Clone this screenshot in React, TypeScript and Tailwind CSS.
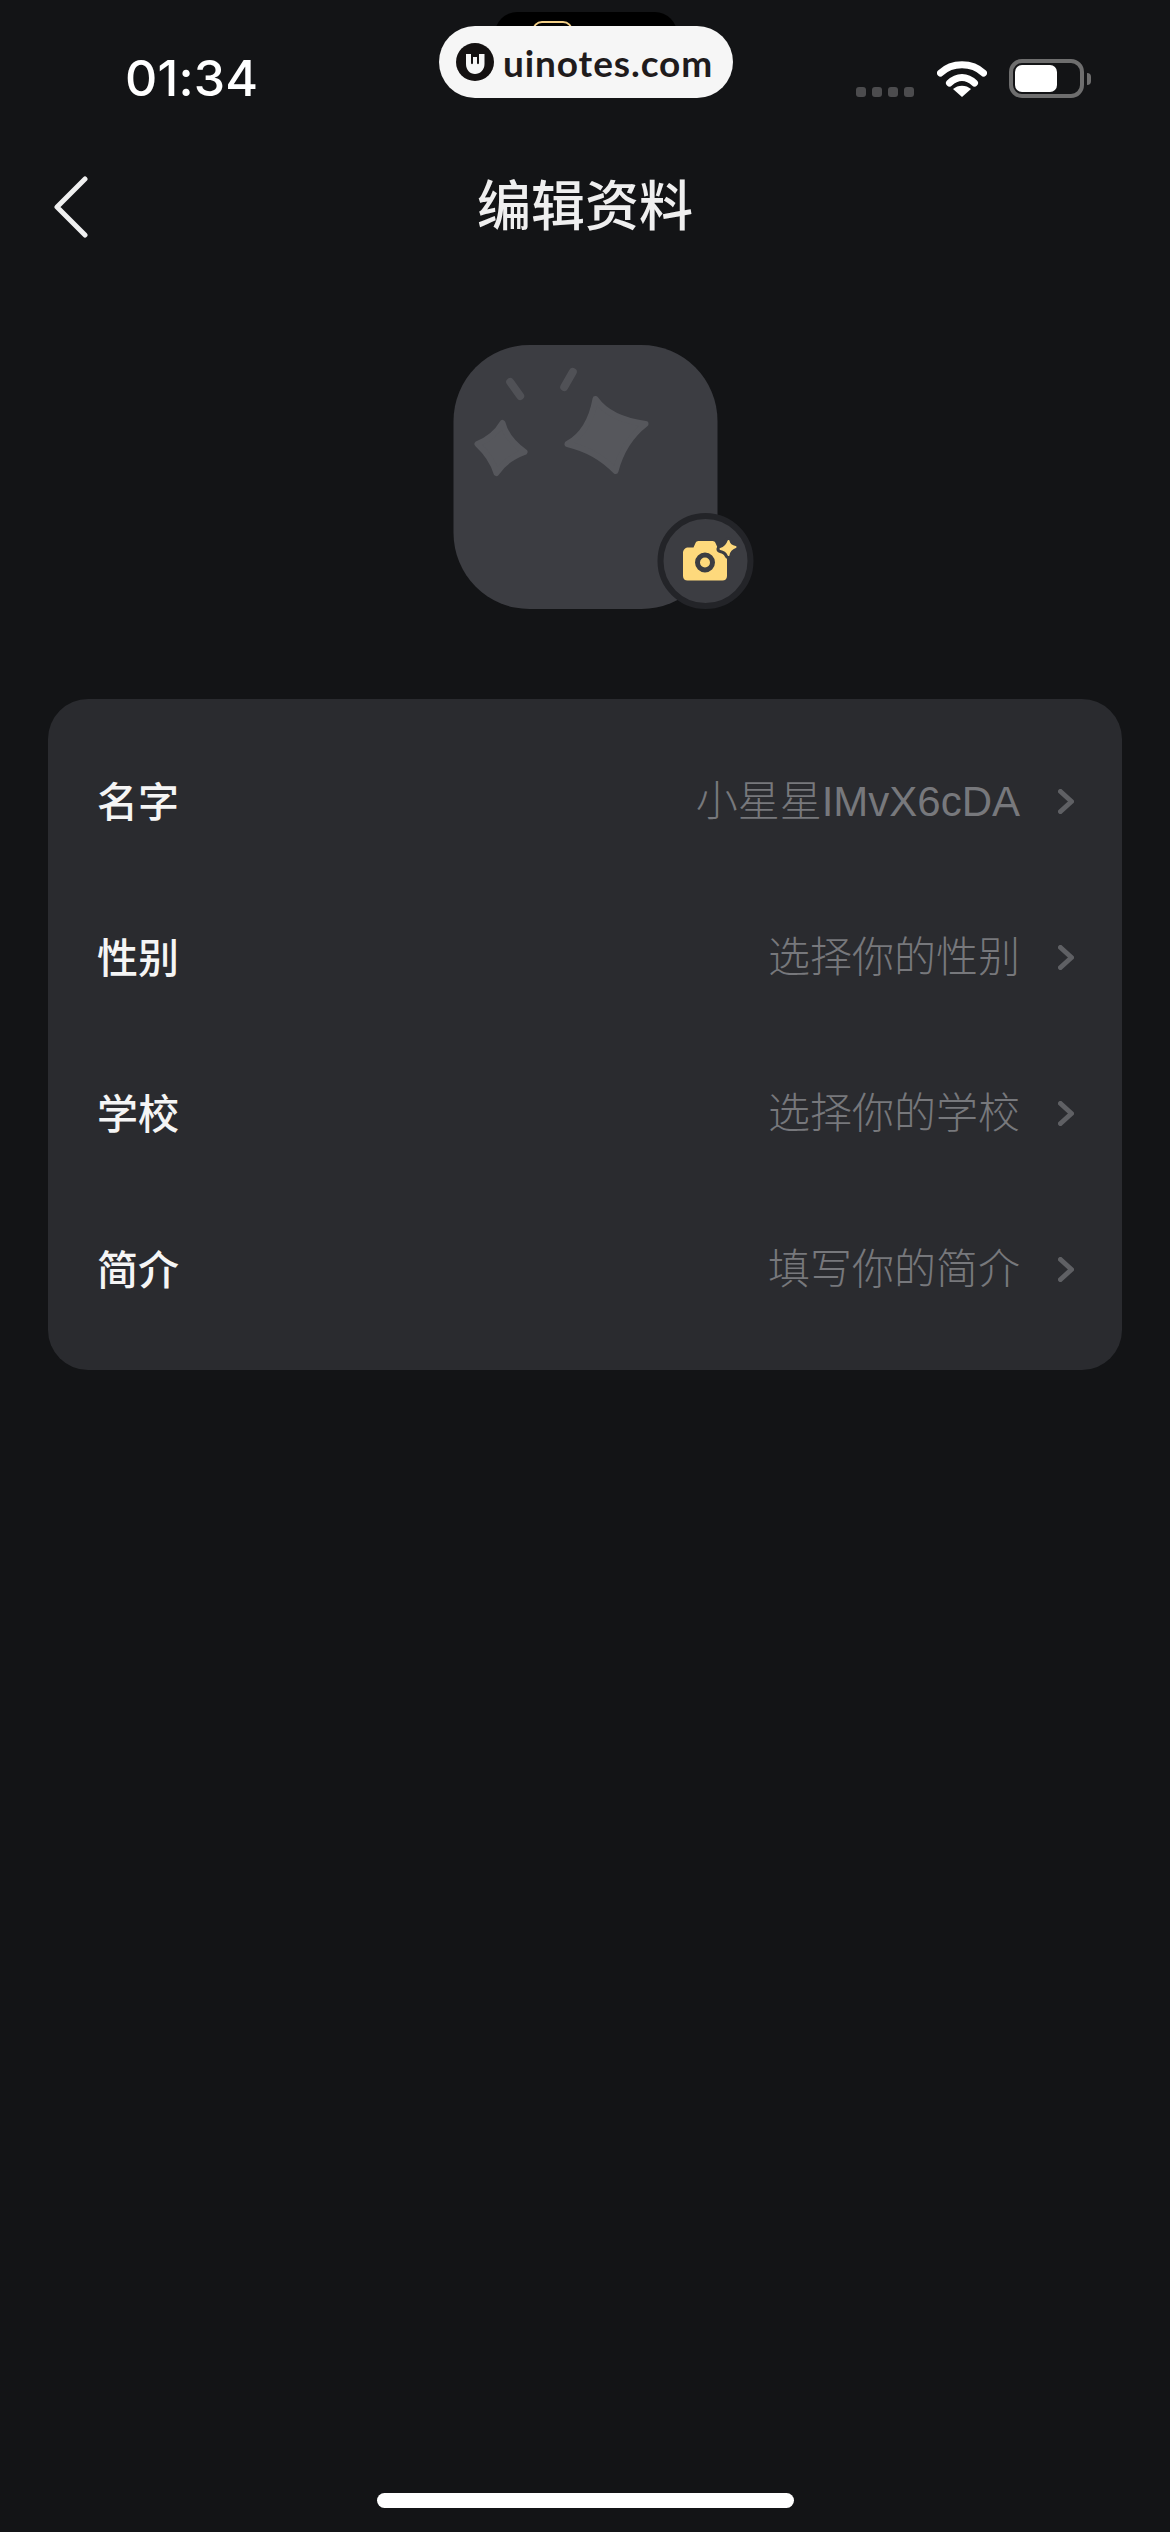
const rows = [
  { label: "名字", value: "小星星IMvX6cDA" },
  { label: "性别", value: "选择你的性别" },
  { label: "学校", value: "选择你的学校" },
  { label: "简介", value: "填写你的简介" },
];

function StatusIcons() {
  return (
    <div className="mb-[5px] flex items-end">
      <div className="mb-[1px] flex gap-[6px]">
        <span className="h-[10px] w-[10px] rounded-[3px] bg-[#4c4c4e]" />
        <span className="h-[10px] w-[10px] rounded-[3px] bg-[#4c4c4e]" />
        <span className="h-[10px] w-[10px] rounded-[3px] bg-[#4c4c4e]" />
        <span className="h-[10px] w-[10px] rounded-[3px] bg-[#4c4c4e]" />
      </div>
      <svg className="mb-[1px] ml-[23px]" width="50" height="37" viewBox="0 0 50 37" fill="none">
        <path d="M3.5 13C15 2 35 2 46.5 13" stroke="#fff" strokeWidth="7" strokeLinecap="round" />
        <path d="M12.5 23C20 15.5 30 15.5 37.5 23" stroke="#fff" strokeWidth="7" strokeLinecap="round" />
        <path d="M25 37L16 29C21 24.5 29 24.5 34 29Z" fill="#fff" />
      </svg>
      <div className="ml-[22px] flex items-center">
        <div className="flex h-[39px] w-[75px] items-center rounded-[13px] border-[4px] border-[#6e6e6e] pl-[2px]">
          <div className="h-[27px] w-[42px] rounded-[7px] bg-white" />
        </div>
        <div className="ml-[3px] h-[12px] w-[4px] rounded-r-[4px] bg-[#6e6e6e]" />
      </div>
    </div>
  );
}

function Watermark() {
  return (
    <div className="absolute left-[439px] top-[26px] flex h-[72px] w-[294px] items-center rounded-[36px] bg-[#f6f6f6] pl-[17px]">
      <svg width="38" height="38" viewBox="0 0 38 38">
        <circle cx="19" cy="19" r="19" fill="#141111" />
        <path
          d="M10 11H15V20C15 21.5 17 21.5 17 20V14H21V20C21 21.5 23 21.5 23 20V11H28.5V21C28.5 27 24 31 19 31C14 31 10 27 10 21Z"
          fill="#f6f6f6"
        />
      </svg>
      <span className="ml-[9px] font-['Lato',sans-serif] text-[37px] font-bold leading-none tracking-[0.9px] text-[#1f1b1c]">
        uinotes.com
      </span>
    </div>
  );
}

function Avatar() {
  return (
    <div className="relative mx-auto h-[264px] w-[264px] translate-x-[0.5px] rounded-[76px] bg-[#3c3d42]">
      <svg width="264" height="264" viewBox="0 0 264 264" fill="none">
        <path
          d="M142 54Q156 74 192 79Q170 96 162 126Q143 106 114 99Q136 87 142 54Z"
          fill="#56575c"
          stroke="#56575c"
          strokeWidth="6"
          strokeLinejoin="round"
        />
        <path
          d="M49 78Q53 94 71 107Q52 114 43 128Q38 112 24 99Q41 92 49 78Z"
          fill="#56575c"
          stroke="#56575c"
          strokeWidth="6"
          strokeLinejoin="round"
        />
        <path d="M56.7 37L66.7 51" stroke="#505156" strokeWidth="8" strokeLinecap="round" />
        <path d="M119.3 27L110.7 42" stroke="#505156" strokeWidth="8" strokeLinecap="round" />
      </svg>
      <div className="absolute left-[204px] top-[168px] h-[96px] w-[96px] rounded-full border-[6px] border-[#232428] bg-[#3c3d42]">
        <svg className="absolute -left-[6px] -top-[6px]" width="96" height="96" viewBox="0 0 96 96" fill="none">
          <path
            d="M25.5 40C25.5 36.5 28 34.5 31 34.5H36L38 30C38.5 28.7 39.5 28 41 28H55C56.5 28 57.5 28.7 58 30L60 34.5H64C67 34.5 69.5 36.5 69.5 40V63C69.5 66 67.5 67.5 65 67.5H30C27.5 67.5 25.5 66 25.5 63Z"
            fill="#fed97c"
          />
          <circle cx="47.5" cy="49.5" r="7.5" fill="#fed97c" stroke="#3c3d42" strokeWidth="5" />
          <path
            d="M71 28Q72 33 78 34Q72 36 71 42Q69 37 63 36Q69 34 71 28Z"
            fill="#3c3d42"
            stroke="#3c3d42"
            strokeWidth="8"
            strokeLinejoin="round"
          />
          <path
            d="M71 28Q72 33 78 34Q72 36 71 42Q69 37 63 36Q69 34 71 28Z"
            fill="#fed97c"
            stroke="#fed97c"
            strokeWidth="2"
            strokeLinejoin="round"
          />
        </svg>
      </div>
    </div>
  );
}

export default function App() {
  return (
    <div className="relative flex min-h-[2532px] w-[1170px] flex-col bg-[#131416] font-['Inter','Noto_Sans_CJK_SC',sans-serif]">
      {/* notch peeks out behind the watermark */}
      <div className="absolute left-[495px] top-[12px] h-[40px] w-[182px] rounded-t-[22px] bg-black">
        <div className="ml-[37px] mt-[9px] h-[20px] w-[41px] rounded-t-[10px] border-[2px] border-[#f3cf87]" />
      </div>
      <Watermark />

      <div className="flex h-[110px] items-end justify-between pb-[7px] pl-[125px] pr-[79px]">
        <span className="text-[50px] font-medium leading-[50px] tracking-[0.2px] text-white">01:34</span>
        <StatusIcons />
      </div>

      <div className="mt-[47px] grid h-[100px] grid-cols-3 items-center px-[53px]">
        <svg width="36" height="62" viewBox="0 0 36 62" fill="none">
          <path d="M32 3L4 31L32 59" stroke="#f0f0f0" strokeWidth="5" strokeLinecap="round" strokeLinejoin="round" />
        </svg>
        <h1 className="whitespace-nowrap text-center text-[54px] font-medium leading-none text-[#efefef]">编辑资料</h1>
      </div>

      <div className="mt-[88px]">
        <Avatar />
      </div>

      <div className="mx-[48px] mt-[90px] rounded-[40px] bg-[#2a2b2f] pb-[23px] pl-[49px] pr-[48px] pt-[24px]">
        {rows.map((row) => (
          <div key={row.label} className="flex h-[156px] items-center justify-between">
            <span className="mt-[2px] text-[41px] font-medium leading-none text-[#f5f5f5]">{row.label}</span>
            <div className="flex items-center">
              <span className="mt-[2px] font-['Liberation_Sans','Noto_Sans_CJK_SC',sans-serif] text-[42px] font-light leading-none text-[#77787c]">
                {row.value}
              </span>
              <svg className="ml-[38px]" width="16" height="25" viewBox="0 0 16 25" fill="none">
                <path d="M2.5 2.5L13.5 12.5L2.5 22.5" stroke="#5f6064" strokeWidth="5" strokeLinecap="round" strokeLinejoin="round" />
              </svg>
            </div>
          </div>
        ))}
      </div>

      <div className="mx-auto mb-[24px] mt-auto h-[15px] w-[417px] rounded-[8px] bg-white" />
    </div>
  );
}
